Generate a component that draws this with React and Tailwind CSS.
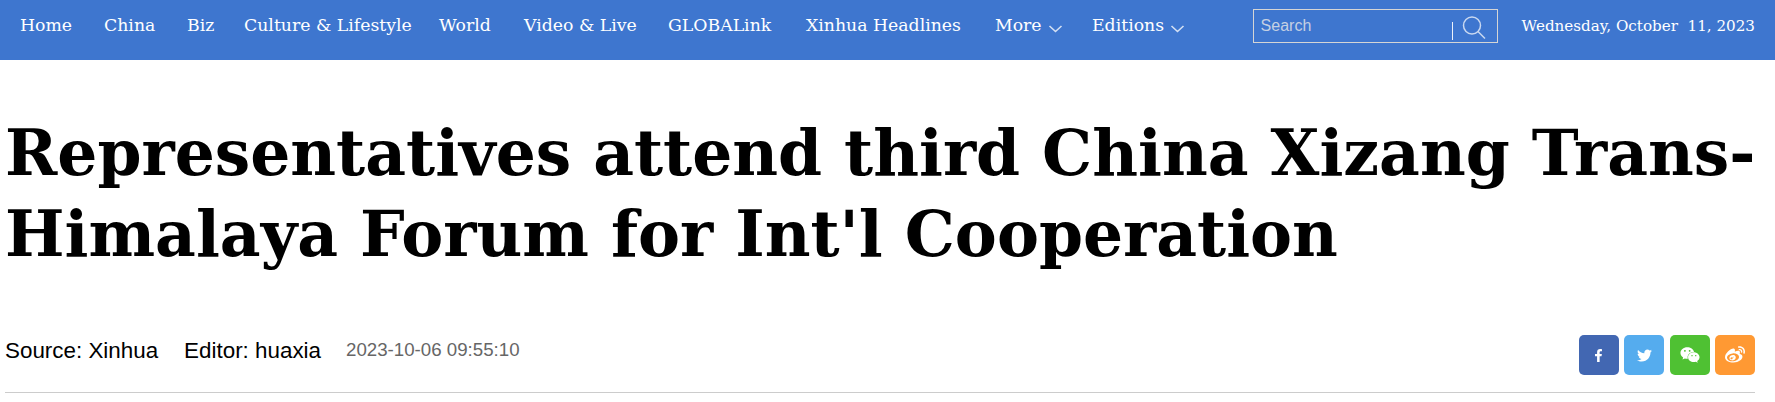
import { FaFacebookF, FaTwitter, FaWeibo, FaWeixin } from 'react-icons/fa';

const navItems = [
  { label: 'Home', width: 'w-[84px]' },
  { label: 'China', width: 'w-[83px]' },
  { label: 'Biz', width: 'w-[57px]' },
  { label: 'Culture & Lifestyle', width: 'w-[195px]' },
  { label: 'World', width: 'w-[85px]' },
  { label: 'Video & Live', width: 'w-[144px]' },
  { label: 'GLOBALink', width: 'w-[138px]' },
  { label: 'Xinhua Headlines', width: 'w-[189px]' },
];

function NavMenu({ label, width }) {
  return (
    <a className={`flex items-center gap-[6px] ${width}`}>
      {label}
      <svg viewBox="0 0 14 8" className="mt-[5px] h-2 w-[15px]" fill="none" stroke="#d4e0f3" strokeWidth="1.6">
        <path d="M1 1l6 5.5L13 1" />
      </svg>
    </a>
  );
}

function ShareButton({ color, children }) {
  return (
    <span className={`flex h-10 w-10 items-center justify-center rounded-[5px] text-white ${color}`}>
      {children}
    </span>
  );
}

export default function App() {
  return (
    <div className="h-[402px] bg-white font-['Liberation_Sans',sans-serif]">
      <header className="flex h-[60px] items-start bg-[#3e76cf] pr-5 pl-5 font-['DejaVu_Serif',serif] text-[17.3px] text-white">
        <nav className="flex h-[52px] flex-1 items-center">
          {navItems.map((item) => (
            <a key={item.label} className={item.width}>
              {item.label}
            </a>
          ))}
          <NavMenu label="More" width="w-[97px]" />
          <NavMenu label="Editions" width="w-[100px]" />
        </nav>
        <div className="mt-[9px] flex h-[34px] w-[245px] items-center border border-[#d5d5d5] pr-[11px] pl-[7px] font-['Liberation_Sans',sans-serif] text-[16px] text-[#c5d0e3]">
          <span className="flex-1">Search</span>
          <span className="mt-[10px] mr-[9px] h-[18px] w-px bg-white/90" />
          <svg viewBox="0 0 24 24" className="mt-[3px] h-6 w-6" fill="none" stroke="#c9d8f0" strokeWidth="1.5">
            <circle cx="10" cy="9.5" r="8.5" />
            <path d="M16 15.5l7 7" />
          </svg>
        </div>
        <div className="ml-[24px] flex h-[52px] items-center text-[15.15px] whitespace-nowrap">
          Wednesday, October&nbsp; 11, 2023
        </div>
      </header>

      <main className="px-[5px]">
        <h1 className="mt-[53px] font-['DejaVu_Serif',serif] text-[63px] leading-[81px] font-bold text-black">
          Representatives attend third China Xizang Trans-Himalaya Forum for Int'l Cooperation
        </h1>

        <div className="mt-[60px] flex h-10 items-center pr-[15px]">
          <div className="mb-[9px] flex items-center">
            <span className="text-[22.4px] text-black">Source: Xinhua</span>
            <span className="ml-[26px] text-[22.4px] text-black">Editor: huaxia</span>
            <span className="ml-[25px] text-[18.7px] text-[#666]">2023-10-06 09:55:10</span>
          </div>
          <div className="ml-auto flex gap-[5.5px]">
            <ShareButton color="bg-[#4267b2]">
              <FaFacebookF className="text-[13px]" />
            </ShareButton>
            <ShareButton color="bg-[#55acee]">
              <FaTwitter className="text-[15px]" />
            </ShareButton>
            <ShareButton color="bg-[#4fc133]">
              <FaWeixin className="text-[20px]" />
            </ShareButton>
            <ShareButton color="bg-[#ff9933]">
              <FaWeibo className="text-[20px]" />
            </ShareButton>
          </div>
        </div>
        <div className="mt-[17px] mr-[15px] border-t border-[#cccccc]" />
      </main>
    </div>
  );
}
